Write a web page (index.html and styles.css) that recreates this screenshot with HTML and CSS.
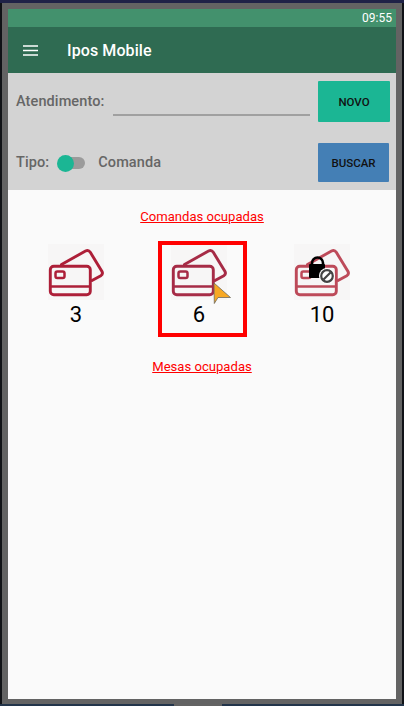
FILE: index.html
```html
<!DOCTYPE html>
<html lang="pt">
<head>
    <meta charset="UTF-8">
    <meta name="viewport" content="width=device-width, initial-scale=1.0">
    <title>Ipos Mobile</title>

    <link rel="stylesheet" href="styles.css">
</head>
<body>
    <svg class="defs" width="0" height="0">
        <symbol id="cards" viewBox="0 0 56 56">
            <rect x="2.3" y="22.3" width="40" height="28.4" rx="3.5" fill="none" stroke="currentColor" stroke-width="2.9"/>
            <path d="M2.3 42.5H42.3" fill="none" stroke="currentColor" stroke-width="2.5"/>
            <rect x="7.5" y="27.5" width="9" height="6.5" rx="1.8" fill="none" stroke="currentColor" stroke-width="2.5"/>
            <path d="M13.5 20.5L37.5 7Q40.5 5.5 42.3 8.3L54 27.5Q55.3 30.2 52.8 31.7L44 36.5" fill="none" stroke="currentColor" stroke-width="2.9" stroke-linecap="round"/>
        </symbol>
    </svg>

    <div class="top-bar"></div>
    <div class="frame">
        <div class="screen">
            <div class="status">09:55</div>
            <header class="appbar">
                <svg class="burger" width="15" height="11" viewBox="0 0 15 11">
                    <path d="M0 1H15M0 5.5H15M0 10H15" stroke="#fff" stroke-width="1.6"/>
                </svg>
                <span class="appbar-title">Ipos Mobile</span>
            </header>

            <section class="panel">
                <div class="panel-row">
                    <label class="field-label">Atendimento:</label>
                    <div class="field-line"></div>
                    <button class="btn btn-novo">NOVO</button>
                </div>
                <div class="panel-row panel-row-tipo">
                    <span class="field-label">Tipo:</span>
                    <span class="toggle"><span class="toggle-knob"></span></span>
                    <span class="field-label toggle-text">Comanda</span>
                    <button class="btn btn-buscar">BUSCAR</button>
                </div>
            </section>

            <main class="content">
                <a class="section-link">Comandas ocupadas</a>
                <div class="cards-grid">
                    <div class="card-item">
                        <div class="card-icon"><svg width="56" height="56"><use href="#cards"/></svg></div>
                        <div class="card-num">3</div>
                    </div>
                    <div class="card-item">
                        <div class="card-icon card-icon-muted"><svg width="56" height="56"><use href="#cards"/></svg></div>
                        <div class="card-num">6</div>
                        <div class="highlight"></div>
                        <svg class="pointer" width="19" height="23" viewBox="0 0 19 23">
                            <path d="M1 1L17.5 15.5H5L1.3 21.5Z" fill="#f7a823" stroke="#6d6a5e" stroke-width="0.8"/>
                        </svg>
                    </div>
                    <div class="card-item">
                        <div class="card-icon card-icon-locked">
                            <svg class="locked-cards" width="56" height="56"><use href="#cards"/></svg>
                            <svg class="lock" width="56" height="56" viewBox="0 0 56 56">
                                <path d="M18 21V19A5.5 5.5 0 0 1 29 19V21" fill="none" stroke="#000" stroke-width="2.6"/>
                                <rect x="15" y="20" width="16" height="14" rx="1" fill="#000"/>
                                <circle cx="33" cy="32" r="8" fill="#fff"/>
                                <circle cx="33" cy="32" r="5.8" fill="none" stroke="#444" stroke-width="2.2"/>
                                <path d="M29.5 35.5L36.5 28.5" stroke="#444" stroke-width="2.2"/>
                            </svg>
                        </div>
                        <div class="card-num">10</div>
                    </div>
                </div>
                <a class="section-link section-link-mesas">Mesas ocupadas</a>
            </main>
        </div>
    </div>
    <div class="bottom-bar"><div class="notch"></div></div>
</body>
</html>
```

FILE: styles.css
```css
* {
    margin: 0;
    padding: 0;
    box-sizing: border-box;
}
body {
    background-color: #101216;
    font-family: Roboto, sans-serif;
    height: 706px;
    display: flex;
    flex-direction: column;
    overflow: hidden;
}
.defs {
    position: absolute;
}
.top-bar {
    height: 3px;
    background-color: #1f2247;
}
.frame {
    height: 701px;
    margin: 0 2px;
    padding: 6px 6px 5px;
    background-color: #636363;
}
.bottom-bar {
    height: 2px;
    background-color: #22344a;
}
.notch {
    width: 48px;
    height: 2px;
    margin-left: 174px;
    background-color: #636363;
}
.screen {
    height: 100%;
    display: flex;
    flex-direction: column;
    background-color: #fafafa;
}
.status {
    height: 18px;
    padding-right: 4px;
    background-color: #43916d;
    color: #fff;
    font-size: 12px;
    line-height: 18px;
    text-align: right;
}
.appbar {
    height: 46px;
    display: flex;
    align-items: center;
    padding-left: 15px;
    background-color: #2f6b52;
}
.burger {
    margin-right: 29px;
}
.appbar-title {
    color: #fff;
    font-size: 16px;
    font-weight: 500;
    letter-spacing: 0.1px;
}
.panel {
    height: 117px;
    padding: 8px 6px 8px 8px;
    display: flex;
    flex-direction: column;
    gap: 21px;
    background-color: #d3d3d3;
}
.panel-row {
    height: 41px;
    display: flex;
    align-items: center;
}
.panel-row-tipo {
    height: 39px;
}
.field-label {
    color: #666;
    font-size: 14.5px;
    font-weight: 500;
    letter-spacing: 0.1px;
}
.field-line {
    flex: 1;
    height: 2px;
    margin: 26px 8px 0 9px;
    background-color: #a0a0a0;
}
.btn {
    border: none;
    border-radius: 1px;
    color: #111;
    font-family: Roboto, sans-serif;
    font-size: 11.5px;
    font-weight: 500;
}
.btn-novo {
    width: 72px;
    height: 41px;
    background-color: #1bb694;
}
.btn-buscar {
    width: 71px;
    height: 39px;
    margin-left: auto;
    margin-right: 1px;
    background-color: #447fb5;
}
.toggle {
    position: relative;
    width: 25px;
    height: 12px;
    margin: 0 13px 0 11px;
    border-radius: 6px;
    background-color: #9b9b9b;
}
.toggle-knob {
    position: absolute;
    left: -3px;
    top: -2px;
    width: 17px;
    height: 17px;
    border-radius: 50%;
    background-color: #1bb694;
}
.content {
    flex: 1;
    display: flex;
    flex-direction: column;
    padding-top: 18px;
}
.section-link {
    color: #f00;
    font-size: 13.1px;
    line-height: 17px;
    text-align: center;
    text-decoration: underline;
}
.cards-grid {
    display: grid;
    grid-template-columns: repeat(3, 122px);
    column-gap: 1px;
    padding: 19px 0 0 7px;
}
.card-item {
    position: relative;
    display: flex;
    flex-direction: column;
    align-items: center;
}
.card-icon {
    position: relative;
    width: 56px;
    height: 56px;
    background-color: #f7f6f6;
    color: #ad1f38;
}
.card-icon svg {
    display: block;
}
.card-icon-muted {
    color: #a62b46;
}
.locked-cards {
    color: #bd4a59;
}
.lock {
    position: absolute;
    left: 0;
    top: 0;
}
.card-num {
    color: #000;
    font-size: 22px;
    line-height: 26px;
    margin-top: 2px;
}
.highlight {
    position: absolute;
    left: 20px;
    top: -3px;
    width: 89px;
    height: 96px;
    border: 4px solid #f00;
}
.pointer {
    position: absolute;
    left: 75px;
    top: 38px;
}
.section-link-mesas {
    margin-top: 30px;
}
```
